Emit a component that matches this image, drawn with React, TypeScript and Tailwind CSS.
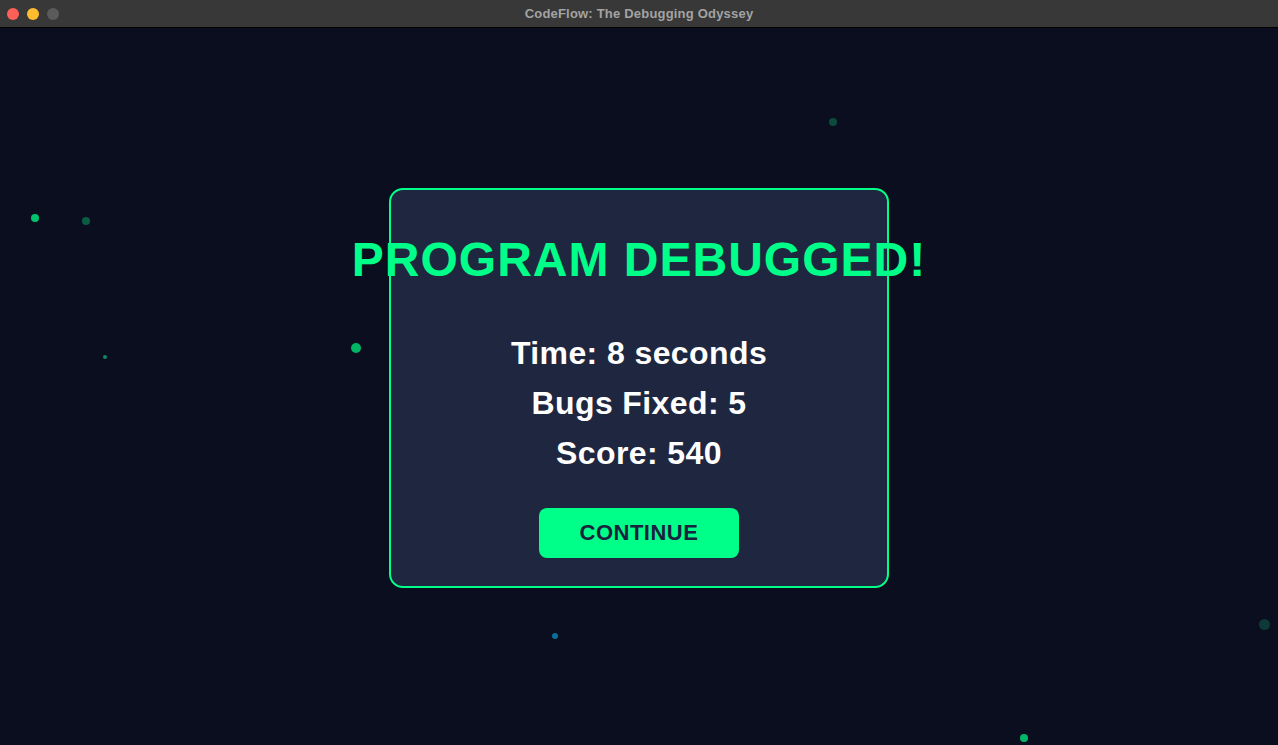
import React from "react";

const particles = [
  { x: 35, y: 218, s: 8, c: "bg-[#00c46c]" },
  { x: 86, y: 221, s: 8, c: "bg-[#0b5c43]" },
  { x: 105, y: 357, s: 4, c: "bg-[#0b8a62]" },
  { x: 356, y: 348, s: 10, c: "bg-[#00b566]" },
  { x: 833, y: 122, s: 8, c: "bg-[#0c4a3b]" },
  { x: 555, y: 636, s: 6, c: "bg-[#0a6e9c]" },
  { x: 1264, y: 624, s: 11, c: "bg-[#0d3a36]" },
  { x: 1024, y: 738, s: 8, c: "bg-[#00b86a]" },
];

export default function App() {
  return (
    <div className="w-[1278px] h-[745px] flex flex-col bg-[#0a0e1f] overflow-hidden font-['Liberation_Sans',Arial,sans-serif]">
      {/* window title bar */}
      <div className="h-[28px] shrink-0 relative flex items-center justify-center bg-[#383838] border-b border-black">
        <div className="absolute left-[7px] top-[8px] flex gap-[8px]">
          <span className="w-[12px] h-[12px] rounded-full bg-[#fe5f57]" />
          <span className="w-[12px] h-[12px] rounded-full bg-[#febc2e]" />
          <span className="w-[12px] h-[12px] rounded-full bg-[#5b5b5b]" />
        </div>
        <span className="text-[13px] font-bold tracking-[0.2px] text-[#a3a3a3]">CodeFlow: The Debugging Odyssey</span>
      </div>

      {/* game area */}
      <div className="relative flex-1 flex items-center justify-center">
        {particles.map((p, i) => (
          <span
            key={i}
            className={`absolute rounded-full ${p.c}`}
            style={{ left: p.x - p.s / 2, top: p.y - 28 - p.s / 2, width: p.s, height: p.s }}
          />
        ))}

        <div className="relative mt-[2px] w-[500px] h-[400px] rounded-[14px] border-2 border-[#00ff88] bg-[#1f2640] flex flex-col items-center pt-[41px]">
          <h1 className="whitespace-nowrap text-[48px] leading-[58px] font-bold tracking-[1px] text-[#00ff88]">
            PROGRAM DEBUGGED!
          </h1>
          <div className="mt-[39px] flex flex-col items-center text-[32px] leading-[50px] font-bold tracking-[0.4px] text-white">
            <p>Time: 8 seconds</p>
            <p>Bugs Fixed: 5</p>
            <p>Score: 540</p>
          </div>
          <button className="mt-[30px] w-[200px] h-[50px] rounded-[8px] bg-[#00ff88] text-[22px] font-bold tracking-[0.5px] text-[#1a2240]">
            CONTINUE
          </button>
        </div>
      </div>
    </div>
  );
}
